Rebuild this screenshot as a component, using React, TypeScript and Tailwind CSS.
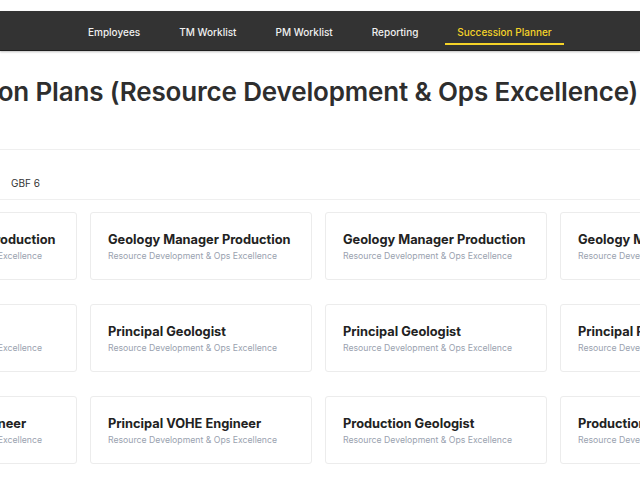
import React from "react";

const sub = "Resource Development & Ops Excellence";
const rows = [
  ["Geology Manager Production", "Geology Manager Production", "Geology Manager Production", "Geology Manager Production"],
  ["Principal Geologist", "Principal Geologist", "Principal Geologist", "Principal Production Geologist"],
  ["Principal VOHE Engineer", "Principal VOHE Engineer", "Production Geologist", "Production Geologist"],
];

const nav = ["Employees", "TM Worklist", "PM Worklist", "Reporting", "Succession Planner"];

export default function App() {
  return (
    <div className="w-[640px] h-[480px] overflow-hidden bg-white font-['Inter',sans-serif]">
      <div className="h-[11px] bg-white" />
      <nav className="h-[40px] bg-[#333333] border-b border-[#1f1f1f] shadow-[0_1px_2px_rgba(0,0,0,0.25)] flex items-stretch pl-[76px] gap-[15px]">
        {nav.map((n, i) => {
          const active = i === nav.length - 1;
          return (
            <div key={n} className="relative flex items-center px-[12px] pt-[3px]">
              <span className={`text-[10px] font-medium ${active ? "text-[#f5d328]" : "text-[#f0f0f0]"}`}>{n}</span>
              {active && <div className="absolute left-0 right-0 top-[32px] h-[2px] bg-[#f5d328]" />}
            </div>
          );
        })}
      </nav>
      <div className="ml-[-145px] w-[1300px]">
        <div className="pl-[30px] pt-[24px] h-[98px]">
          <h1 className="text-[26px] leading-[34px] font-semibold text-[#2e2e2e] tracking-[-0.15px] whitespace-nowrap">
            Succession Plans (Resource Development &amp; Ops Excellence)
          </h1>
        </div>
        <div className="border-t border-[#efefef] h-[51px] flex items-center pl-[156px] border-b">
          <span className="text-[10px] text-[#333] pt-[18px]">GBF 6</span>
        </div>
        <div className="pt-[12px] flex flex-col gap-[24px]">
          {rows.map((r, ri) => (
            <div key={ri} className="flex gap-[13px]">
              {r.map((t, ci) => (
                <div key={ci} className="w-[222px] h-[68px] shrink-0 border border-[#ececec] rounded-[3px] pl-[17px] pt-[18px]">
                  <div className="text-[12.8px] leading-[18px] font-bold text-[#222] whitespace-nowrap">{t}</div>
                  <div className="text-[8.7px] leading-[12px] mt-[1px] text-[#9aa2af] whitespace-nowrap">{sub}</div>
                </div>
              ))}
            </div>
          ))}
        </div>
      </div>
    </div>
  );
}
